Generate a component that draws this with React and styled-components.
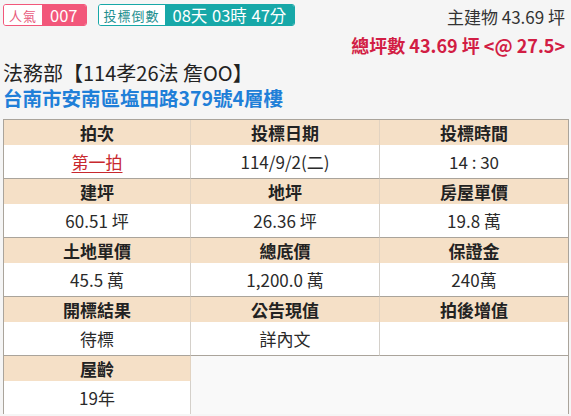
import React from "react";
import styled, { createGlobalStyle } from "styled-components";

const Global = createGlobalStyle`
  html, body { margin: 0; padding: 0; background: #f5f5f5; }
  body { font-family: "Noto Sans CJK TC", "Noto Sans", sans-serif; color: #222; }
`;

const Page = styled.div`
  width: 571px;
  height: 416px;
  overflow: hidden;
  padding: 3px 2px 0 3px;
  box-sizing: border-box;
`;

const TopBar = styled.div`
  display: flex;
  justify-content: space-between;
  align-items: flex-start;
`;

const Badges = styled.div`
  display: flex;
  gap: 11px;
  margin-top: 1px;
`;

const Badge = styled.div`
  display: flex;
  height: 22px;
  border: 1px solid ${(p) => p.$color};
  border-radius: 3px;
  overflow: hidden;
  box-sizing: border-box;
`;

const BadgeLabel = styled.span`
  display: flex;
  align-items: center;
  padding: 0 5px;
  background: #fff;
  color: ${(p) => p.$color};
  font-size: 13px;
  letter-spacing: 1px;
`;

const BadgeValue = styled.span`
  display: flex;
  align-items: center;
  padding: 0 ${(p) => p.$pad}px;
  background: ${(p) => p.$color};
  color: #fff;
  font-size: 16.5px;
  word-spacing: 1px;
`;

const Area = styled.div`
  display: flex;
  flex-direction: column;
  align-items: flex-end;
  padding-right: 4px;
`;

const AreaLine = styled.div`
  line-height: 28px;
  font-size: ${(p) => (p.$strong ? 18 : 17)}px;
  font-weight: ${(p) => (p.$strong ? 700 : 400)};
  color: ${(p) => (p.$strong ? "#d21d44" : "#333")};
  white-space: pre;
`;

const Title = styled.div`
  font-size: 20px;
  line-height: 25px;
  color: #222;
  margin-top: 1px;
`;

const Address = styled.div`
  font-size: 19.5px;
  line-height: 25px;
  font-weight: 700;
  color: #1f7fd8;
`;

const Grid = styled.div`
  margin-top: 9px;
  display: grid;
  grid-template-columns: 187px 189px 188px;
  border: 1px solid #aaa49b;
  border-bottom: none;
  width: 566px;
  box-sizing: border-box;
`;

const HeadCell = styled.div`
  height: 25px;
  display: flex;
  align-items: center;
  justify-content: center;
  background: #f5e0c7;
  font-size: 17px;
  font-weight: 700;
  color: #222;
  border-right: ${(p) => (p.$last ? "none" : "1px solid #e2d3c1")};
`;

const ValueCell = styled.div`
  height: 33px;
  display: flex;
  align-items: center;
  justify-content: center;
  background: #fff;
  font-size: 17px;
  color: #2a2a2a;
  border-right: ${(p) => (p.$last ? "none" : "1px solid #d4d0ca")};
  border-bottom: 1px solid #aaa49b;
`;

const Empty = styled.div`
  grid-column: span 2;
  grid-row: span 2;
  background: #f9f9f9;
`;

const LastValue = styled(ValueCell)`
  border-bottom: none;
`;

const Link = styled.a`
  color: #c8282e;
  text-decoration: underline;
  text-underline-offset: 3px;
`;

const groups = [
  [
    ["拍次", <Link key="l">第一拍</Link>],
    ["投標日期", "114/9/2(二)"],
    ["投標時間", "14 : 30"],
  ],
  [
    ["建坪", "60.51 坪"],
    ["地坪", "26.36 坪"],
    ["房屋單價", "19.8 萬"],
  ],
  [
    ["土地單價", "45.5 萬"],
    ["總底價", "1,200.0 萬"],
    ["保證金", "240萬"],
  ],
  [
    ["開標結果", "待標"],
    ["公告現值", "詳內文"],
    ["拍後增值", ""],
  ],
];

export default function App() {
  return (
    <Page>
      <Global />
      <TopBar>
        <Badges>
          <Badge $color="#f2577a">
            <BadgeLabel $color="#e8597c">人氣</BadgeLabel>
            <BadgeValue $color="#f2577a" $pad={8}>007</BadgeValue>
          </Badge>
          <Badge $color="#17a8a8">
            <BadgeLabel $color="#1f8f8f">投標倒數</BadgeLabel>
            <BadgeValue $color="#17a8a8" $pad={8}>08天 03時 47分</BadgeValue>
          </Badge>
        </Badges>
        <Area>
          <AreaLine>主建物 43.69 坪</AreaLine>
          <AreaLine $strong>{"總坪數 43.69 坪 <@ 27.5>"}</AreaLine>
        </Area>
      </TopBar>
      <Title>法務部【114孝26法 詹OO】</Title>
      <Address>台南市安南區塩田路379號4層樓</Address>
      <Grid>
        {groups.map((g, gi) => (
          <React.Fragment key={gi}>
            {g.map(([h], i) => (
              <HeadCell key={"h" + i} $last={i === 2}>{h}</HeadCell>
            ))}
            {g.map(([, v], i) => (
              <ValueCell key={"v" + i} $last={i === 2}>{v}</ValueCell>
            ))}
          </React.Fragment>
        ))}
        <HeadCell>屋齡</HeadCell>
        <Empty />
        <LastValue>19年</LastValue>
      </Grid>
    </Page>
  );
}
